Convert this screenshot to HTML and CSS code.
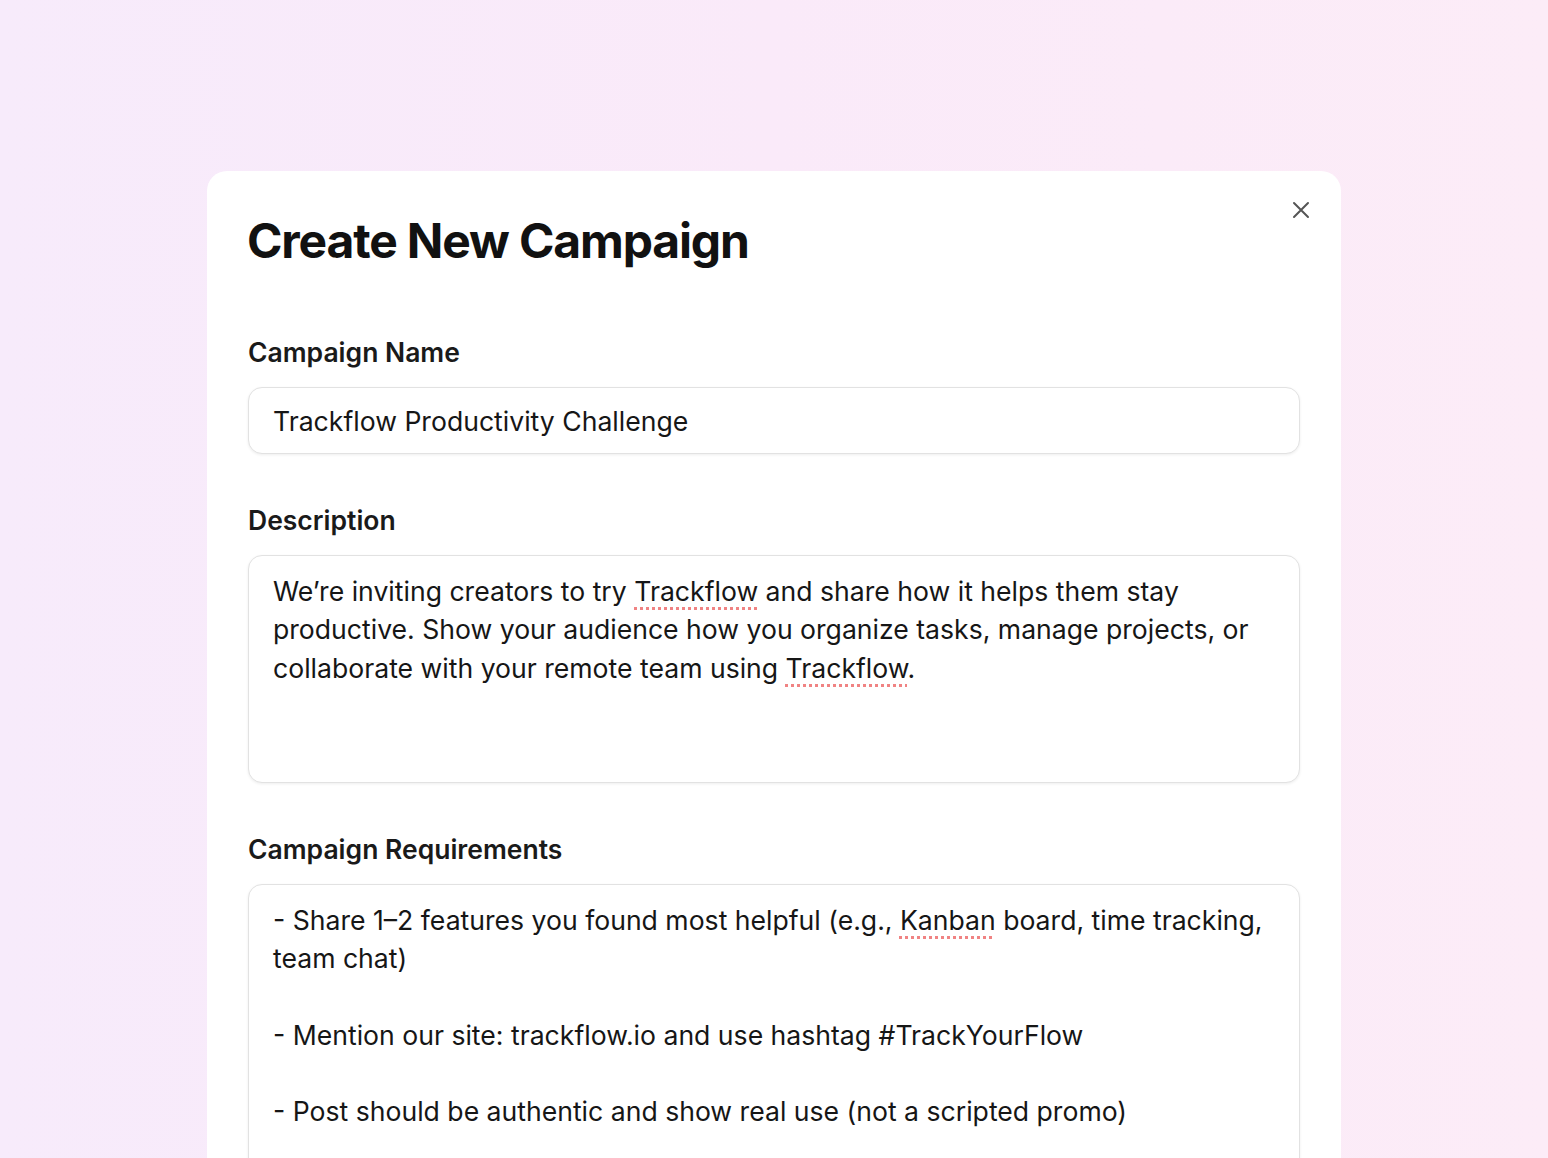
FILE: index.html
```html
<!DOCTYPE html>
<html lang="en">
<head>
<meta charset="utf-8">
<title>Create New Campaign</title>
<link rel="stylesheet" href="styles.css">
</head>
<body>
  <div class="card">
    <button class="close" aria-label="Close">
      <svg width="24" height="24" viewBox="0 0 24 24" fill="none" stroke="currentColor" stroke-width="2" stroke-linecap="round">
        <path d="M5 5 L19 19 M19 5 L5 19"/>
      </svg>
    </button>
    <h1 class="title">Create New Campaign</h1>

    <div class="field">
      <label class="label">Campaign Name</label>
      <div class="input">Trackflow Productivity Challenge</div>
    </div>

    <div class="field">
      <label class="label">Description</label>
      <div class="textarea desc">We’re inviting creators to try <span class="typo">Trackflow</span> and share how it helps them stay productive. Show your audience how you organize tasks, manage projects, or collaborate with your remote team using <span class="typo">Trackflow</span>.</div>
    </div>

    <div class="field">
      <label class="label">Campaign Requirements</label>
      <div class="textarea reqs">
        <p>- Share 1–2 features you found most helpful (e.g., <span class="typo">Kanban</span> board, time tracking, team chat)</p>
        <p>- Mention our site: trackflow.io and use hashtag #TrackYourFlow</p>
        <p>- Post should be authentic and show real use (not a scripted promo)</p>
      </div>
    </div>
  </div>
</body>
</html>
```
FILE: styles.css
```css
* { box-sizing: border-box; }

html, body {
  margin: 0;
  height: 100%;
}

body {
  background: linear-gradient(90deg, #f7ebfb 0%, #faeaf9 50%, #fcecf7 100%);
  font-family: Inter, "Noto Sans", "Liberation Sans", sans-serif;
  color: #1a1a1a;
  overflow: hidden;
  padding-top: 171px;
}

.card {
  position: relative;
  width: 1134px;
  margin: 0 auto;
  background: #ffffff;
  border-radius: 20px;
  padding: 41px 41px 60px;
  min-height: 1100px;
}

.close {
  position: absolute;
  top: 27px;
  right: 28px;
  width: 24px;
  height: 24px;
  padding: 0;
  border: 0;
  background: none;
  color: #555555;
  display: flex;
}

.title {
  margin: 0 0 0 -1px;
  font-size: 48px;
  line-height: 58px;
  font-weight: 700;
  color: #111111;
  letter-spacing: -1.15px;
}

.field {
  margin-top: 51px;
  display: flex;
  flex-direction: column;
}

.field:first-of-type {
  margin-top: 67px;
}

.label {
  font-size: 26.5px;
  line-height: 31px;
  font-weight: 600;
  color: #1a1a1a;
  margin-bottom: 19px;
}

.input,
.textarea {
  border: 1px solid #e2e2e2;
  border-radius: 14px;
  box-shadow: 0 1px 3px rgba(0, 0, 0, 0.07);
  font-size: 26.6px;
  color: #161616;
  background: #fff;
}

.input {
  height: 67px;
  padding: 2px 24px 0;
  line-height: 63px;
}

.textarea {
  padding: 16px 24px;
  line-height: 38.3px;
}

.desc {
  height: 228px;
}

.reqs {
  height: 420px;
}

.reqs p {
  margin: 0 0 38.3px;
}

.typo {
  text-decoration: underline dotted #f08383;
  text-decoration-thickness: 2.5px;
  text-underline-offset: 6px;
}
```
